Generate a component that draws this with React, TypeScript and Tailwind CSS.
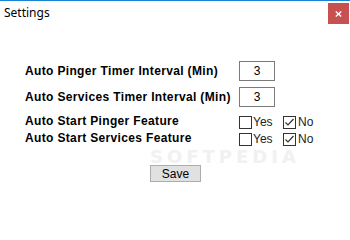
import React from "react";

function Box({ checked }: { checked?: boolean }) {
  return (
    <div className="w-[13px] h-[13px] border border-[#333333] bg-white relative shrink-0">
      {checked && (
        <svg className="absolute left-0 top-0" width="11" height="11" viewBox="0 0 11 11">
          <polyline points="1.5,5.5 4,8 9.5,2" fill="none" stroke="#333333" strokeWidth="1.2" />
        </svg>
      )}
    </div>
  );
}

function CheckRow({ label }: { label: string }) {
  return (
    <div className="flex items-center h-[13px]">
      <div className="w-[214px] font-bold text-[12px] leading-[13px] tracking-[0.35px] text-black whitespace-nowrap -mt-[2px]">
        {label}
      </div>
      <div className="flex items-center w-[44px]">
        <Box />
        <span className="ml-[1px] text-[12px] leading-[13px] text-[#222]">Yes</span>
      </div>
      <div className="flex items-center">
        <Box checked />
        <span className="ml-[2px] text-[12px] leading-[13px] text-[#222]">No</span>
      </div>
    </div>
  );
}

function InputRow({ label }: { label: string }) {
  return (
    <div className="flex items-center h-[20px]">
      <div className="w-[214px] font-bold text-[12px] leading-[20px] tracking-[0.35px] text-black whitespace-nowrap">
        {label}
      </div>
      <div className="w-[36px] h-[20px] border border-[#7a7a7a] bg-white flex items-center justify-center text-[12px] text-black">
        3
      </div>
    </div>
  );
}

export default function App() {
  return (
    <div
      className="w-[350px] h-[205px] bg-white relative overflow-hidden border-t border-[#1883d7]"
      style={{ fontFamily: '"Liberation Sans", Arial, sans-serif' }}
    >
      <div className="flex justify-between items-start pl-[4px] pr-[1px] pt-[2px]">
        <div
          className="text-[12px] leading-[19px] text-black"
          style={{ fontFamily: '"Noto Sans", "Open Sans", sans-serif' }}
        >
          Settings
        </div>
        <div className="w-[21px] h-[21px] bg-[#c75050] flex items-center justify-center">
          <svg width="7" height="6" viewBox="0 0 7 6">
            <line x1="0.8" y1="0.5" x2="6.2" y2="5.5" stroke="white" strokeWidth="1.4" />
            <line x1="6.2" y1="0.5" x2="0.8" y2="5.5" stroke="white" strokeWidth="1.4" />
          </svg>
        </div>
      </div>

      <div
        className="absolute left-[150px] top-[149px] text-[18px] leading-[14px] font-bold tracking-[4px] text-[#f1f1f1] pointer-events-none select-none"
        style={{ fontFamily: '"DejaVu Sans", sans-serif' }}
      >
        SOFTPEDIA
      </div>

      <div className="relative flex flex-col pl-[25px] mt-[37px]">
        <InputRow label="Auto Pinger Timer Interval (Min)" />
        <div className="mt-[6px]">
          <InputRow label="Auto Services Timer Interval (Min)" />
        </div>
        <div className="mt-[9px]">
          <CheckRow label="Auto Start Pinger Feature" />
        </div>
        <div className="mt-[4px]">
          <CheckRow label="Auto Start Services Feature" />
        </div>
        <div className="mt-[19px] ml-[125px]">
          <div className="w-[51px] h-[17px] bg-[#e1e1e1] border border-[#adadad] flex items-center justify-center text-[12px] text-black">
            Save
          </div>
        </div>
      </div>
    </div>
  );
}
